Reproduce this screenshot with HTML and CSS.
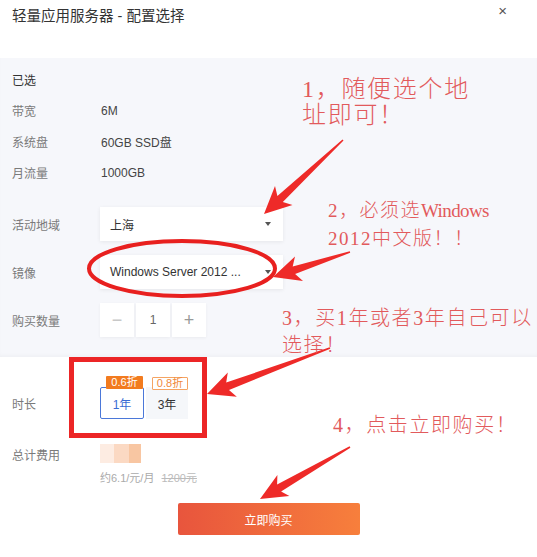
FILE: index.html
```html
<!DOCTYPE html>
<html lang="zh-CN">
<head>
<meta charset="utf-8">
<title>轻量应用服务器 - 配置选择</title>
<link rel="stylesheet" href="styles.css">
</head>
<body>
<div class="dialog">
  <div class="header">
    <span class="title">轻量应用服务器 - 配置选择</span>
    <span class="close">×</span>
  </div>
  <div class="panel">
    <div class="info-row"><span class="k strong">已选</span></div>
    <div class="info-row"><span class="k">带宽</span><span class="v">6M</span></div>
    <div class="info-row"><span class="k">系统盘</span><span class="v">60GB SSD盘</span></div>
    <div class="info-row"><span class="k">月流量</span><span class="v">1000GB</span></div>
    <div class="form">
      <div class="form-row"><span class="k">活动地域</span><div class="select"><span>上海</span><i class="caret"></i></div></div>
      <div class="form-row"><span class="k">镜像</span><div class="select"><span>Windows Server 2012 ...</span><i class="caret"></i></div></div>
      <div class="form-row"><span class="k">购买数量</span>
        <div class="stepper"><span class="step minus">−</span><span class="step num">1</span><span class="step plus">+</span></div>
      </div>
    </div>
  </div>
  <div class="section">
    <div class="dur-row">
      <span class="k">时长</span>
      <div class="opts">
        <div class="opt active">1年<span class="badge fill">0.6折</span></div>
        <div class="opt plain">3年<span class="badge line">0.8折</span></div>
      </div>
    </div>
    <div class="total-row">
      <span class="k total-k">总计费用</span>
      <div class="price">
        <div class="blur"></div>
        <div class="sub">约6.1/元/月 <s>1200元</s></div>
      </div>
    </div>
    <div class="btn-wrap"><button class="buy">立即购买</button></div>
  </div>
</div>

<div class="annot">
  <svg class="marks" width="537" height="557" viewBox="0 0 537 557">
    <rect x="71.5" y="359.5" width="133" height="76" fill="none" stroke="#ec2526" stroke-width="5"/>
    <ellipse cx="182" cy="268.5" rx="93" ry="27.5" fill="none" stroke="#e8201f" stroke-width="4"/>
    <polygon fill="#ee2a28" points="343.5,140.6 282.8,201.9 292.5,205 264,214 275,186 277.4,196.1 342.5,139.4"/>
    <polygon fill="#ee2a28" points="350.2,252.8 295.1,274.0 303,281 273,277 295.0,256.5 292.7,266.4 349.8,251.2"/>
    <polygon fill="#ee2a28" points="330.3,348.7 229.0,390.0 236.8,396.8 207,394 227.8,372.4 226.2,382.6 329.7,347.3"/>
    <polygon fill="#ee2a28" points="350.4,447.7 281.1,491.5 289.4,495.9 260,499 277.4,475.1 277.1,484.5 349.6,446.3"/>
  </svg>
  <div class="note n1">1，随便选个地<br>址即可！</div>
  <div class="note n2">2，必须选<span class="latin">Windows</span><br>2012中文版！！</div>
  <div class="note n3">3，买1年或者3年自己可以<br>选择！</div>
  <div class="note n4">4，点击立即购买！</div>
</div>
</body>
</html>
```
FILE: styles.css
```css
* { box-sizing: border-box; }
html, body { margin: 0; padding: 0; }
body {
  width: 537px;
  height: 557px;
  position: relative;
  overflow: hidden;
  background: #fff;
  font-family: "Liberation Sans", "Noto Sans CJK SC", sans-serif;
  font-size: 12px;
  color: #333;
}

.header {
  height: 58px;
  display: flex;
  justify-content: space-between;
  align-items: flex-start;
  padding: 0 30px 0 12px;
}
.title { font-size: 14.5px; line-height: 20px; margin-top: 6px; color: #333; }
.close { font-size: 15px; line-height: 14px; margin-top: 4px; color: #555; }

.panel {
  background: #f6f7fb;
  padding: 6px 12px 20px;
  box-shadow: inset 0 -3px 4px -2px rgba(0,0,0,0.04);
}
.info-row { display: flex; align-items: center; height: 31px; }
.k { width: 88px; flex: none; color: #7a7a7a; }
.k.strong { color: #333; }
.v { color: #444; padding-left: 1px; }

.form { margin-top: 19px; display: flex; flex-direction: column; gap: 14px; }
.form-row { display: flex; align-items: center; height: 34px; }
.select {
  width: 183px;
  height: 34px;
  background: #fff;
  box-shadow: 0 1px 4px rgba(0,0,0,0.07);
  display: flex;
  align-items: center;
  justify-content: space-between;
  padding: 0 12px 0 10px;
  color: #333;
}
.caret {
  width: 0; height: 0;
  border-left: 3px solid transparent;
  border-right: 3px solid transparent;
  border-top: 4px solid #555;
}
.stepper { display: flex; gap: 2px; }
.step {
  width: 34px; height: 34px;
  background: #fff;
  box-shadow: 0 1px 3px rgba(0,0,0,0.05);
  display: flex; align-items: center; justify-content: center;
}
.step.minus { color: #c8c8c8; font-size: 18px; }
.step.num { color: #666; font-size: 12px; }
.step.plus { color: #999; font-size: 18px; }

.section { padding: 30px 12px 0; }
.dur-row { display: flex; align-items: center; height: 32px; }
.opts { display: flex; gap: 2px; }
.opt {
  position: relative;
  height: 32px;
  display: flex; align-items: center; justify-content: center;
  font-size: 12px;
}
.opt.active { width: 44px; border: 1px solid #4b78d9; border-radius: 2px; color: #3a6bd4; }
.opt.plain { width: 42px; background: #f5f7fa; color: #333; }
.badge {
  position: absolute;
  top: -12px;
  right: 0;
  font-size: 11px;
  line-height: 13px;
  padding: 0 3px;
  border-radius: 1px;
}
.badge.fill { background: #f27b1f; color: #fff; width: 37px; text-align: center; }
.badge.line { background: #fff; color: #f08a3a; border: 1px solid #f5a463; width: 36px; text-align: center; top: -10px; line-height: 11px; }

.total-row { display: flex; align-items: flex-start; margin-top: 25px; }
.total-k { padding-top: 5px; line-height: 14px; }
.blur {
  width: 41px; height: 19px;
  background: linear-gradient(90deg, #fdece2 0 35%, #fbd9c3 35% 70%, #f8c6a2 70% 100%);
}
.sub { margin-top: 8px; line-height: 14px; font-size: 11px; color: #aaa; }
.sub s { margin-left: 4px; color: #bbb; }

.btn-wrap { display: flex; justify-content: center; margin-top: 18px; }
.buy {
  width: 182px; height: 32px;
  border: none; border-radius: 2px;
  background: linear-gradient(90deg, #e8553d, #f77f3c);
  color: #fff;
  font-family: "Liberation Sans", "Noto Sans CJK SC", sans-serif;
  font-size: 12px;
}

.annot { position: absolute; left: 0; top: 0; width: 537px; height: 557px; pointer-events: none; }
.marks { position: absolute; left: 0; top: 0; }
.note {
  position: absolute;
  font-family: "Liberation Serif", "Noto Sans CJK SC", serif;
  font-weight: 300;
  color: #e25a5c;
  white-space: nowrap;
}
.n1 { left: 302px; top: 76px; font-size: 24px; line-height: 26px; letter-spacing: 1.7px; }
.n2 { left: 328px; top: 197px; font-size: 19px; line-height: 28px; letter-spacing: 1.5px; }
.n2 .latin { letter-spacing: -0.6px; }
.n3 { left: 282px; top: 305px; font-size: 20px; line-height: 27px; letter-spacing: 1.6px; }
.n4 { left: 333px; top: 413px; font-size: 20px; line-height: 24px; letter-spacing: 1.6px; }
```
